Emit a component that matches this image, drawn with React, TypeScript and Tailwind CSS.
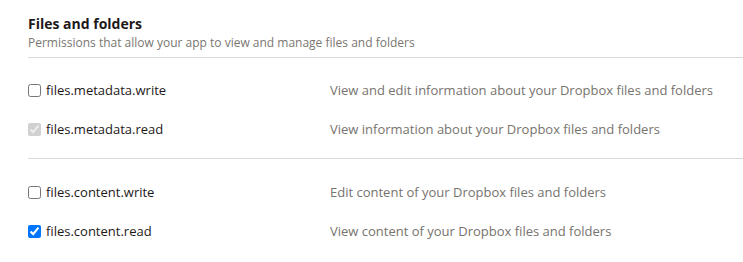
const groups = [
  [
    { scope: "files.metadata.write", desc: "View and edit information about your Dropbox files and folders", checked: false, disabled: false },
    { scope: "files.metadata.read", desc: "View information about your Dropbox files and folders", checked: true, disabled: true },
  ],
  [
    { scope: "files.content.write", desc: "Edit content of your Dropbox files and folders", checked: false, disabled: false },
    { scope: "files.content.read", desc: "View content of your Dropbox files and folders", checked: true, disabled: false },
  ],
];

export default function App() {
  return (
    <div className="w-[743px] h-[262px] bg-white pl-[28px] font-['Open_Sans',sans-serif]">
      <div className="pt-[14px] pb-[5px] border-b border-[#d9d9d9]">
        <h2 className="text-[14px] leading-[20px] font-bold text-[#1e1919]">Files and folders</h2>
        <p className="text-[12px] leading-[18px] text-[#7a7671]">
          Permissions that allow your app to view and manage files and folders
        </p>
      </div>

      {groups.map((rows, i) => (
        <div
          key={i}
          className={i === 0 ? "pt-[13px] pb-[9px] border-b border-[#d9d9d9]" : "pt-[14px]"}
        >
          {rows.map((row) => (
            <div key={row.scope} className="flex items-center h-[39px]">
              <label className="w-[302px] flex items-center gap-[5px] text-[13px] text-[#1e1919]">
                <input
                  type="checkbox"
                  defaultChecked={row.checked}
                  disabled={row.disabled}
                  className="m-0 w-[13px] h-[13px]"
                />
                <span>{row.scope}</span>
              </label>
              <span className="text-[13px] text-[#77736e]">{row.desc}</span>
            </div>
          ))}
        </div>
      ))}
    </div>
  );
}
